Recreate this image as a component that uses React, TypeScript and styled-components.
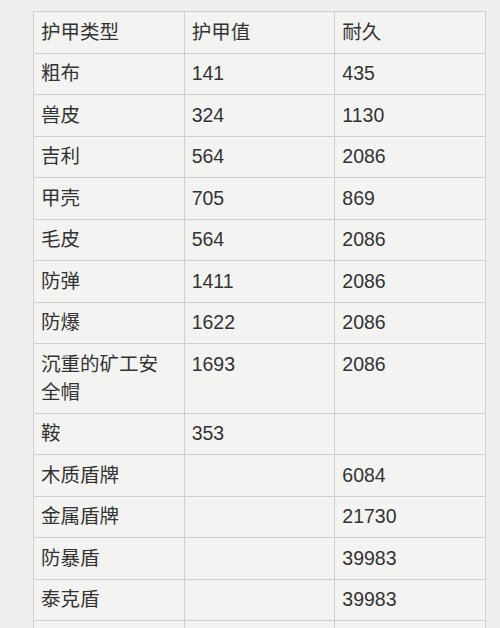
import styled, { createGlobalStyle } from "styled-components";

const GlobalStyle = createGlobalStyle`
  html, body {
    margin: 0;
    padding: 0;
    background: #efefed;
  }
`;

const Page = styled.div`
  width: 500px;
  height: 628px;
  overflow: hidden;
  padding: 11px 0 0 33px;
  box-sizing: border-box;
  background: #efefed;
  font-family: "Liberation Sans", "Noto Sans CJK SC", sans-serif;
`;

const Table = styled.table`
  border-collapse: collapse;
  table-layout: fixed;
  width: 453px;
  background: #f3f3f2;
`;

const Cell = styled.td`
  border: 1px solid #cfcfcf;
  padding: 5.5px 7px 7px;
  font-size: 19.5px;
  line-height: 28px;
  color: #333;
  vertical-align: top;
  text-align: left;
  font-weight: normal;
`;

const rows: [string, string, string][] = [
  ["粗布", "141", "435"],
  ["兽皮", "324", "1130"],
  ["吉利", "564", "2086"],
  ["甲壳", "705", "869"],
  ["毛皮", "564", "2086"],
  ["防弹", "1411", "2086"],
  ["防爆", "1622", "2086"],
  ["沉重的矿工安全帽", "1693", "2086"],
  ["鞍", "353", ""],
  ["木质盾牌", "", "6084"],
  ["金属盾牌", "", "21730"],
  ["防暴盾", "", "39983"],
  ["泰克盾", "", "39983"],
  ["", "", ""],
];

export default function App() {
  return (
    <>
      <GlobalStyle />
      <Page>
        <Table>
          <thead>
            <tr>
              <Cell as="th">护甲类型</Cell>
              <Cell as="th">护甲值</Cell>
              <Cell as="th">耐久</Cell>
            </tr>
          </thead>
          <tbody>
            {rows.map((r, i) => (
              <tr key={i}>
                <Cell>{r[0] || "\u00a0"}</Cell>
                <Cell>{r[1]}</Cell>
                <Cell>{r[2]}</Cell>
              </tr>
            ))}
          </tbody>
        </Table>
      </Page>
    </>
  );
}
